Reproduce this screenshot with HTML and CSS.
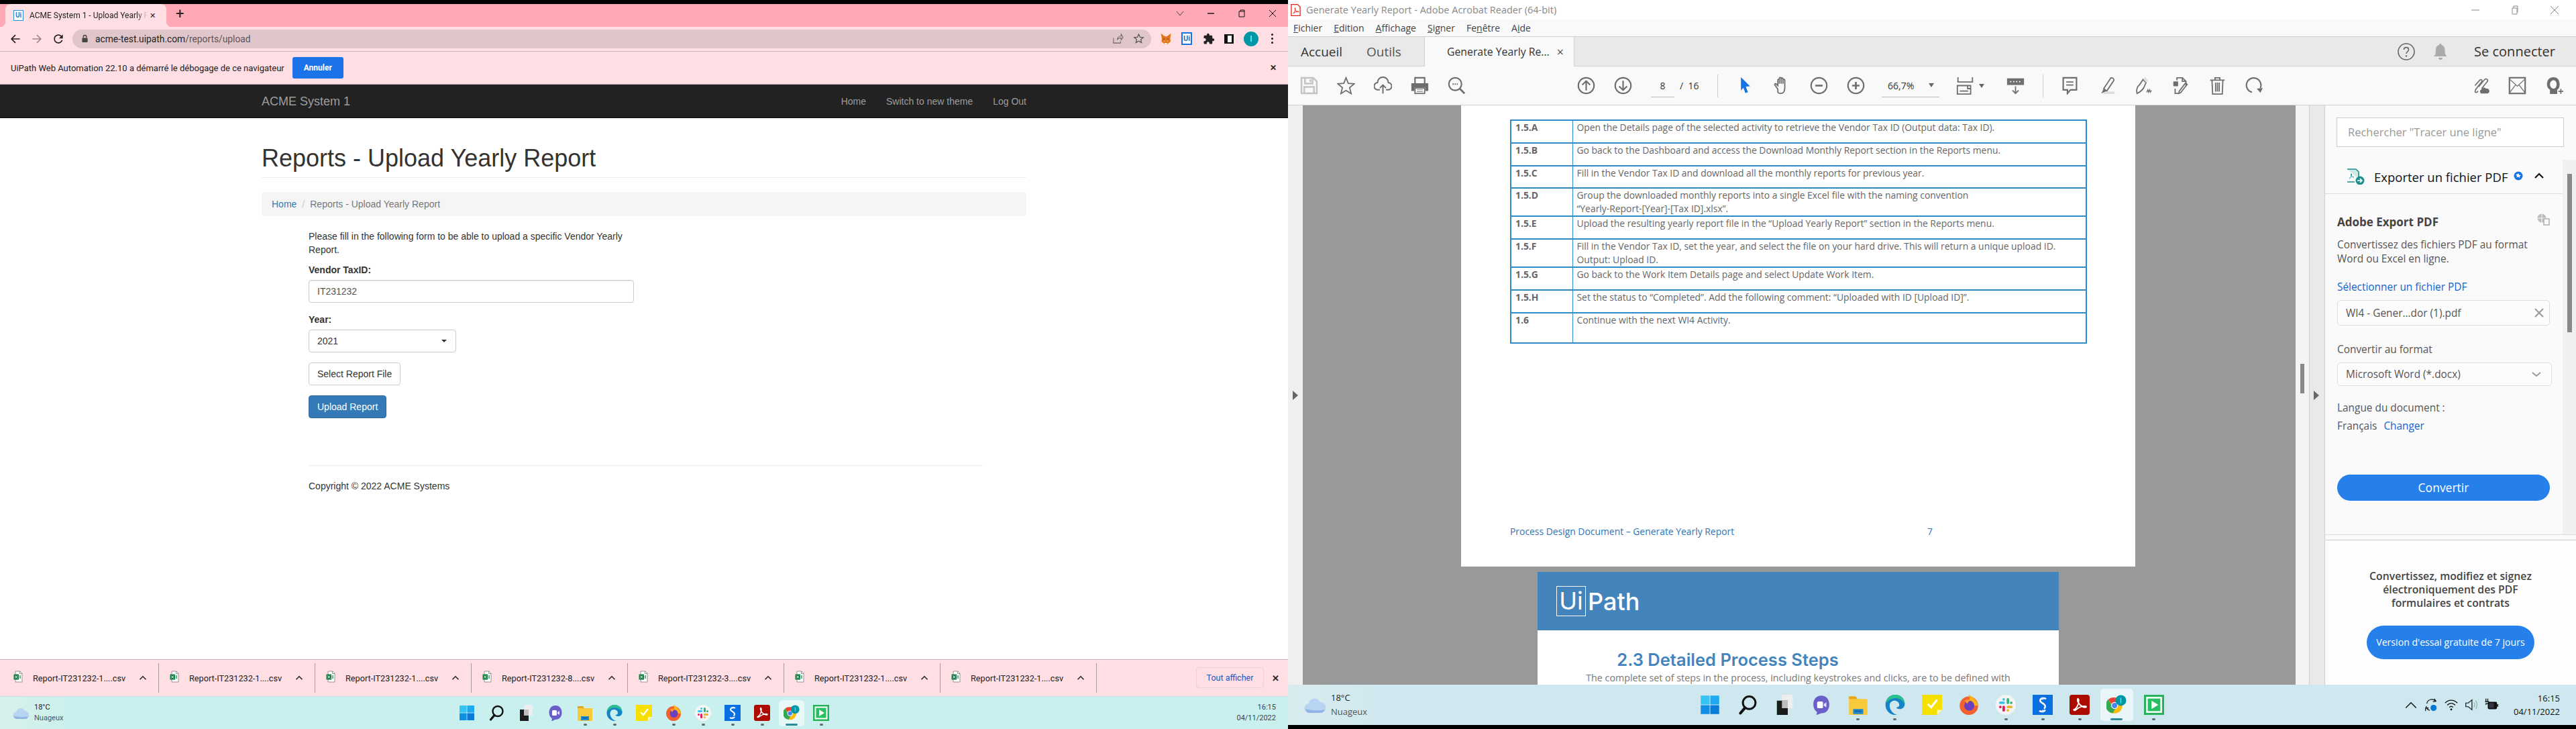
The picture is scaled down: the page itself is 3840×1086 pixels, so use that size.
FILE: index.html
```html
<!DOCTYPE html>
<html lang="en">
<head>
  <meta charset="UTF-8" />
  <title>ACME System 1 - Upload Yearly Report</title>
  <link rel="stylesheet" href="styles.css">
</head>
<body>
  <!-- shared icons -->
  <svg class="sprite" xmlns="http://www.w3.org/2000/svg">
    <symbol id="i-win" viewBox="0 0 24 24">
      <rect x="1" y="1" width="10.6" height="10.6" fill="#35c2f5"/><rect x="12.4" y="1" width="10.6" height="10.6" fill="#1fa9ef"/>
      <rect x="1" y="12.4" width="10.6" height="10.6" fill="#0f8fe3"/><rect x="12.4" y="12.4" width="10.6" height="10.6" fill="#0a7bd6"/>
    </symbol>
    <symbol id="i-search" viewBox="0 0 24 24">
      <circle cx="14" cy="9.5" r="7.5" fill="none" stroke="#111" stroke-width="2.4"/><path d="M9 15.5L3.5 22" stroke="#111" stroke-width="3.2" stroke-linecap="round"/>
    </symbol>
    <symbol id="i-task" viewBox="0 0 24 24">
      <rect x="9" y="0" width="13" height="16" fill="#eee"/><rect x="3" y="7" width="13" height="17" fill="#1b1b1b"/><rect x="9" y="7" width="7" height="9" fill="#bdbdbd"/>
    </symbol>
    <symbol id="i-chat" viewBox="0 0 24 24">
      <path d="M12 1c6 0 9.500 4.500 9.500 10.500S18 22 12 22c-1.500 0-3.500 2-6 2l1-3.500C4 18.500 2.500 15.500 2.500 11.500 2.500 5.500 6 1 12 1z" fill="#6a5fc8"/>
      <rect x="7" y="8" width="7" height="8" rx="1.500" fill="#fff"/><path d="M15 11l3-2v6l-3-2z" fill="#e5e1fb"/>
    </symbol>
    <symbol id="i-folder" viewBox="0 0 24 24">
      <path d="M1 2h8l2 3h12v19H1z" fill="#f9c93c"/><path d="M1 2h8l2 3H1z" fill="#e3a51a"/><rect x="6" y="17" width="12" height="6" fill="#1b8ad1"/><rect x="8" y="19" width="8" height="1" fill="#0a4f85"/>
    </symbol>
    <symbol id="i-edge" viewBox="0 0 24 24">
      <path d="M12 0c7 0 11.500 5 11.500 11 0 4-3 6-6 6-2.500 0-4-1-4-2 2 0 3.500-1 3.500-3 0-3-3-5-6-5-3.500 0-5.500 3-5.500 6 0 5 4 10 9 11-7 1-14-4-14-12C.5 5 5.500 0 12 0z" fill="#1683c9"/>
      <path d="M1 10C2 4 7 0 12 0c7 0 11.500 5 11.500 11-2-4-6-7-11-7-5 0-9 3-11.500 6z" fill="#2bc18c"/>
    </symbol>
    <symbol id="i-sticky" viewBox="0 0 24 24">
      <path d="M0 0h24v18l-6 6H0z" fill="#f5e000"/><path d="M18 24v-6h6z" fill="#fff8b0"/><path d="M7 11l4 4 7-9" fill="none" stroke="#fff" stroke-width="2.400"/>
    </symbol>
    <symbol id="i-firefox" viewBox="0 0 24 24">
      <circle cx="12" cy="13" r="11" fill="#f4602d"/><path d="M12 0c5 3 10 7 11 13H14z" fill="#fcb316"/><circle cx="12.500" cy="13" r="6" fill="#6a3fc0"/><path d="M7 7c2-2 6-2 8 0-3 0-4 2-5 4z" fill="#ff9a2a"/>
    </symbol>
    <symbol id="i-slack" viewBox="0 0 24 24">
      <circle cx="12" cy="12" r="12" fill="#f4f4f4"/>
      <rect x="13" y="4" width="3" height="7" rx="1.500" fill="#2eb67d"/><rect x="17" y="8" width="3" height="3" rx="1.500" fill="#2eb67d"/>
      <rect x="4" y="8" width="7" height="3" rx="1.500" fill="#36c5f0"/><rect x="8" y="4" width="3" height="3" rx="1.500" fill="#36c5f0"/>
      <rect x="13" y="13" width="7" height="3" rx="1.500" fill="#ecb22e"/><rect x="13" y="17" width="3" height="3" rx="1.500" fill="#ecb22e"/>
      <rect x="8" y="13" width="3" height="7" rx="1.500" fill="#e01e5a"/><rect x="4" y="13" width="3" height="3" rx="1.500" fill="#e01e5a"/>
    </symbol>
    <symbol id="i-sblue" viewBox="0 0 24 24">
      <rect width="24" height="24" fill="#0a6fe0"/><path d="M16 5c-3-2-7-1-7 2 0 3 6 3 6 7 0 1-.5 2-1.500 2.500M8 19c2 1.500 6 1.500 7-1" fill="none" stroke="#fff" stroke-width="2"/><path d="M12 3v3M12 18v3" stroke="#cfe6ff" stroke-width="1.500"/>
    </symbol>
    <symbol id="i-acro" viewBox="0 0 24 24">
      <rect width="24" height="24" rx="3" fill="#ad0b00"/><path d="M5 18c3-1 6-6 6-11 0-3-1.500-3-1.500-1 0 4 5 9 9 9 2 0 2-1.500 0-1.500-3 0-8 2-11 4.500-1 1-2.500.5-2.500 0z" fill="none" stroke="#fff" stroke-width="1.500"/>
    </symbol>
    <symbol id="i-chrome" viewBox="0 0 32 32">
      <circle cx="13" cy="17" r="12.500" fill="#fbbc04"/>
      <path d="M13 4.500A12.500 12.500 0 0 1 24.500 12H13a5 5 0 0 0-4.500 3L3 7.500A12.500 12.500 0 0 1 13 4.500z" fill="#ea4335"/>
      <path d="M3 7.500l5.500 9.500a5 5 0 0 0 6 4.700L10 29.200A12.500 12.500 0 0 1 3 7.500z" fill="#34a853"/>
      <circle cx="13" cy="17" r="5.500" fill="#fff"/><circle cx="13" cy="17" r="4.200" fill="#4285f4"/>
      <circle cx="23" cy="9" r="8.500" fill="#0097a7"/><rect x="22.500" y="5" width="1" height="8" fill="#c8eef2"/>
    </symbol>
    <symbol id="i-green" viewBox="0 0 24 24">
      <rect width="24" height="24" fill="#27b35a"/><rect x="2.500" y="2.500" width="19" height="19" fill="#fff"/><rect x="4.500" y="4.500" width="15" height="15" fill="#27c060"/><path d="M9 7l8 5-8 5z" fill="#fff"/>
    </symbol>
    <symbol id="i-cloud" viewBox="0 0 32 28">
      <path d="M8 26a7 7 0 0 1-1-14 9 9 0 0 1 17-2 8 8 0 0 1 1 16z" fill="#b9d3f2"/><path d="M2 20a7 7 0 0 0 6 6h17a8 8 0 0 0 6-5c-8 2-21 2-29-1z" fill="#8fb4e6"/>
    </symbol>
    <symbol id="i-xls" viewBox="0 0 14 18">
      <path d="M3 1h7l3 3v13H3z" fill="#fff" stroke="#8a8a8a" stroke-width=".9"/><path d="M9.500 1v3.500H13" fill="none" stroke="#8a8a8a" stroke-width=".9"/><rect x="0.500" y="5.500" width="7.500" height="8" fill="#107c41"/><path d="M2.400 7.500l3.700 4M6.100 7.500l-3.700 4" stroke="#fff"/><path d="M10 7v5" stroke="#21a366" stroke-width="1.500"/>
    </symbol>
    <symbol id="i-chev" viewBox="0 0 16 10">
      <path d="M2 8l6-6 6 6" fill="none" stroke="#222" stroke-width="2"/>
    </symbol>
  </svg>

  <div class="screen">
    <!-- left window: browser -->
    <div class="browser">
      <div class="tabstrip">
        <div class="tab">
          <span class="favicon">Ui</span>
          <span class="tab-title">ACME System 1 - Upload Yearly R</span>
          <span class="tab-close">&#10005;</span>
        </div>
        <span class="newtab">+</span>
        <div class="winctl">
          <svg class="ctl" viewBox="0 0 12 12"><path d="M1 3l5 6 5-6" fill="none" stroke="#444"/></svg>
          <svg class="ctl" viewBox="0 0 12 12"><path d="M1 6h10" stroke="#111" stroke-width="1.400"/></svg>
          <svg class="ctl" viewBox="0 0 12 12"><path d="M2 3h8v8H2zM4 3V1h6v2" fill="none" stroke="#111"/></svg>
          <svg class="ctl" viewBox="0 0 12 12"><path d="M1 1l10 10M11 1L1 11" stroke="#111"/></svg>
        </div>
      </div>
      <div class="toolbar">
        <svg class="nav-ico" viewBox="0 0 24 24"><path d="M20 12H5M12 5l-7 7 7 7" fill="none" stroke="#222" stroke-width="2"/></svg>
        <svg class="nav-ico" viewBox="0 0 24 24"><path d="M4 12h15M12 5l7 7-7 7" fill="none" stroke="#9a8a8e" stroke-width="2"/></svg>
        <svg class="nav-ico" viewBox="0 0 24 24"><path fill="#222" d="M17.650 6.350C16.200 4.900 14.210 4 12 4c-4.420 0-7.990 3.580-7.990 8s3.570 8 7.990 8c3.730 0 6.840-2.550 7.730-6h-2.080c-.82 2.330-3.040 4-5.650 4-3.310 0-6-2.690-6-6s2.690-6 6-6c1.660 0 3.140.69 4.220 1.780L13 11h7V4l-2.350 2.350z"/></svg>
        <div class="omnibox">
          <svg class="lock" viewBox="0 0 12 14"><path d="M3.500 6V4a2.500 2.500 0 0 1 5 0v2" fill="none" stroke="#444" stroke-width="1.500"/><rect x="1.500" y="6" width="9" height="7" rx="1" fill="#444"/></svg>
          <span class="url">acme-test.uipath.com<span class="url-path">/reports/upload</span></span>
          <svg class="omni-ico share" viewBox="0 0 18 18"><path d="M2 8v8h11v-3M8 11c0-4 3-6 6-6V2l3 5-3 4V8c-3 0-5 1-6 3z" fill="none" stroke="#666" stroke-width="1.100"/></svg>
          <svg class="omni-ico" viewBox="0 0 18 18"><path d="M9 2l2.100 4.700 5 .5-3.800 3.300 1.100 5L9 13l-4.400 2.500 1.100-5L1.900 7.200l5-.5z" fill="none" stroke="#555" stroke-width="1.300"/></svg>
        </div>
        <div class="ext-icons">
          <svg class="ext fox" viewBox="0 0 24 24"><path fill="#e2761b" d="M2 1l8 6h4l8-6-1.500 11 1 5-5 4-2.500 2h-3L8 21l-5-4 1-5z"/><path fill="#f6a25a" d="M10 14l-3 3 3 1zM14 14l3 3-3 1z"/><path fill="#fff3e4" d="M9 20h6l-1.500 3h-3z"/><circle cx="8" cy="12" r="1" fill="#333"/><circle cx="16" cy="12" r="1" fill="#333"/></svg>
          <span class="ext-ui">Ui</span>
          <svg class="ext" viewBox="0 0 24 24"><path fill="#222" d="M20.500 11H19V7c0-1.100-.9-2-2-2h-4V3.500C13 2.120 11.880 1 10.500 1S8 2.120 8 3.500V5H4c-1.100 0-1.990.9-1.990 2v3.800H3.500c1.490 0 2.700 1.210 2.700 2.700s-1.210 2.700-2.700 2.700H2V20c0 1.100.9 2 2 2h3.800v-1.500c0-1.490 1.210-2.700 2.700-2.700 1.490 0 2.700 1.210 2.700 2.700V22H17c1.100 0 2-.9 2-2v-4h1.500c1.380 0 2.500-1.120 2.500-2.500S21.880 11 20.500 11z"/></svg>
          <span class="side-panel"></span>
          <span class="avatar">I</span>
          <span class="kebab"><i></i><i></i><i></i></span>
        </div>
      </div>
      <div class="infobar">
        <span class="info-text">UiPath Web Automation 22.10 a démarré le débogage de ce navigateur</span>
        <button class="info-btn">Annuler</button>
        <span class="info-close">&#10005;</span>
      </div>

      <div class="page">
        <nav class="navbar">
          <div class="container nav-inner">
            <span class="brand">ACME System 1</span>
            <ul class="nav-links">
              <li>Home</li>
              <li>Switch to new theme</li>
              <li>Log Out</li>
            </ul>
          </div>
        </nav>
        <div class="container">
          <h1 class="page-header">Reports - Upload Yearly Report</h1>
          <div class="breadcrumb"><a>Home</a><span class="slash">/</span><span class="crumb-active">Reports - Upload Yearly Report</span></div>
          <form class="upload-form">
            <p class="lead-text">Please fill in the following form to be able to upload a specific Vendor Yearly Report.</p>
            <label class="lbl">Vendor TaxID:</label>
            <div class="form-control wide">IT231232</div>
            <label class="lbl">Year:</label>
            <div class="form-control year">2021<span class="caret"></span></div>
            <div class="btn btn-default">Select Report File</div>
            <div class="btn btn-primary">Upload Report</div>
          </form>
          <footer class="site-footer">Copyright © 2022 ACME Systems</footer>
        </div>
      </div>

      <div class="downloads">
        <div class="dl-item"><svg class="xls"><use href="#i-xls"/></svg><span class="dl-name">Report-IT231232-1....csv</span><svg class="dl-chev"><use href="#i-chev"/></svg></div>
        <div class="dl-item"><svg class="xls"><use href="#i-xls"/></svg><span class="dl-name">Report-IT231232-1....csv</span><svg class="dl-chev"><use href="#i-chev"/></svg></div>
        <div class="dl-item"><svg class="xls"><use href="#i-xls"/></svg><span class="dl-name">Report-IT231232-1....csv</span><svg class="dl-chev"><use href="#i-chev"/></svg></div>
        <div class="dl-item"><svg class="xls"><use href="#i-xls"/></svg><span class="dl-name">Report-IT231232-8....csv</span><svg class="dl-chev"><use href="#i-chev"/></svg></div>
        <div class="dl-item"><svg class="xls"><use href="#i-xls"/></svg><span class="dl-name">Report-IT231232-3....csv</span><svg class="dl-chev"><use href="#i-chev"/></svg></div>
        <div class="dl-item"><svg class="xls"><use href="#i-xls"/></svg><span class="dl-name">Report-IT231232-1....csv</span><svg class="dl-chev"><use href="#i-chev"/></svg></div>
        <div class="dl-item"><svg class="xls"><use href="#i-xls"/></svg><span class="dl-name">Report-IT231232-1....csv</span><svg class="dl-chev"><use href="#i-chev"/></svg></div>
        <div class="dl-show">Tout afficher</div>
        <span class="dl-close">&#10005;</span>
      </div>

      <div class="taskbar tb-small">
        <div class="weather"><svg class="w-cloud"><use href="#i-cloud"/></svg><div><div class="w-temp">18°C</div><div class="w-desc">Nuageux</div></div></div>
        <div class="tb-icons">
          <div class="tb-item"><svg><use href="#i-win"/></svg><i></i></div>
          <div class="tb-item"><svg><use href="#i-search"/></svg><i></i></div>
          <div class="tb-item"><svg><use href="#i-task"/></svg><i></i></div>
          <div class="tb-item"><svg><use href="#i-chat"/></svg><i></i></div>
          <div class="tb-item open"><svg><use href="#i-folder"/></svg><i></i></div>
          <div class="tb-item open"><svg><use href="#i-edge"/></svg><i></i></div>
          <div class="tb-item"><svg><use href="#i-sticky"/></svg><i></i></div>
          <div class="tb-item open"><svg><use href="#i-firefox"/></svg><i></i></div>
          <div class="tb-item open"><svg><use href="#i-slack"/></svg><i></i></div>
          <div class="tb-item open"><svg><use href="#i-sblue"/></svg><i></i></div>
          <div class="tb-item open"><svg><use href="#i-acro"/></svg><i></i></div>
          <div class="tb-item active"><svg><use href="#i-chrome"/></svg><i></i></div>
          <div class="tb-item open"><svg><use href="#i-green"/></svg><i></i></div>
        </div>
        <div class="tray"><div class="clock">16:15<br>04/11/2022</div></div>
      </div>
    </div>

    <!-- right window: acrobat -->
    <div class="acrobat">
      <div class="titlebar">
        <svg class="pdf-logo" viewBox="0 0 16 20"><path d="M1 1h10l4 4v14H1z" fill="#fff" stroke="#e2231a" stroke-width="1.400"/><path d="M4 15c2-1 3.500-4 3.500-7 0-2-1-2-1-.5 0 2.500 3 5.500 5.500 5.500 1.200 0 1.200-1 0-1-2 0-5 1-7 3z" fill="none" stroke="#e2231a"/></svg>
        <span class="title-text">Generate Yearly Report - Adobe Acrobat Reader (64-bit)</span>
        <div class="winctl-light">
          <svg class="ctl" viewBox="0 0 14 14"><path d="M1 7h12" stroke="#888"/></svg>
          <svg class="ctl" viewBox="0 0 14 14"><path d="M3 4h7v9H3zM5 4V1h6v9h-1" fill="none" stroke="#888"/></svg>
          <svg class="ctl" viewBox="0 0 14 14"><path d="M1 1l12 12M13 1L1 13" stroke="#888"/></svg>
        </div>
      </div>
      <div class="menubar">
        <span><u>F</u>ichier</span><span><u>E</u>dition</span><span><u>A</u>ffichage</span><span><u>S</u>igner</span><span>Fe<u>n</u>être</span><span>A<u>i</u>de</span>
      </div>
      <div class="tabbar">
        <span class="home-tab">Accueil</span>
        <span class="home-tab tools-tab">Outils</span>
        <div class="doc-tab"><span>Generate Yearly Re...</span><span class="doc-close">&#215;</span></div>
        <div class="tab-right">
          <svg class="help" viewBox="0 0 26 26"><circle cx="13" cy="13" r="12" fill="none" stroke="#666" stroke-width="1.600"/><path d="M9.500 10c0-4.500 7-4.500 7 0 0 3-3.500 3-3.500 6" fill="none" stroke="#666" stroke-width="1.600"/><circle cx="13" cy="19.500" r="1.200" fill="#666"/></svg>
          <svg class="bell" viewBox="0 0 22 26"><path d="M11 1c1 0 1.500 1 1.500 2 4 1 5 4 5 8 0 5 1 7 3 9H1c2-2 3-4 3-9 0-4 1-7 5-8 0-1 .5-2 2-2z" fill="#aaa"/><path d="M8 22h6a3 3 0 0 1-6 0z" fill="#aaa"/></svg>
          <span class="signin">Se connecter</span>
        </div>
      </div>
      <div class="acro-tools">
        <span class="tool"><svg viewBox="0 0 26 26" class="faded"><path d="M2 2h17l5 5v17H2zM7 2v8h11V2M6 24v-9h14v9M15 4v4" fill="none" stroke="#c4c4c4" stroke-width="2.400"/></svg></span>
        <span class="tool"><svg viewBox="0 0 30 30"><path d="M15 2l3.700 9.300 10 .7-7.700 6.500 2.500 9.800L15 23l-8.500 5.300L9 18.500 1.300 12l10-.7z" fill="none" stroke="#6e6e6e" stroke-width="2"/></svg></span>
        <span class="tool"><svg viewBox="0 0 30 30"><path d="M10 22H7a6 6 0 0 1-1-12 9 9 0 0 1 18 0 6 6 0 0 1-1 12h-3M15 28V14M10 19l5-5 5 5" fill="none" stroke="#6e6e6e" stroke-width="2.200"/></svg></span>
        <span class="tool"><svg viewBox="0 0 30 30"><path d="M7 11V2h16v9" fill="none" stroke="#6e6e6e" stroke-width="2.400"/><path d="M1 11h28v13h-5v-6H6v6H1z" fill="#6e6e6e"/><rect x="7" y="19" width="16" height="9" fill="#fff" stroke="#6e6e6e" stroke-width="2"/><path d="M10 22h10M10 25h10" stroke="#6e6e6e"/></svg></span>
        <span class="tool"><svg viewBox="0 0 30 30"><circle cx="12.500" cy="12.500" r="10.500" fill="none" stroke="#6e6e6e" stroke-width="2.400"/><path d="M20 20l8 8" stroke="#6e6e6e" stroke-width="3"/><path d="M8 12.500h2M11.500 12.500h2M15 12.500h2" stroke="#6e6e6e" stroke-width="2"/></svg></span>
        <span class="tool nav-first"><svg viewBox="0 0 30 30"><circle cx="15" cy="15" r="13" fill="none" stroke="#6e6e6e" stroke-width="2.400"/><path d="M15 23V8M8.500 14L15 7.500l6.500 6.500" fill="none" stroke="#6e6e6e" stroke-width="2.400"/></svg></span>
        <span class="tool"><svg viewBox="0 0 30 30"><circle cx="15" cy="15" r="13" fill="none" stroke="#6e6e6e" stroke-width="2.400"/><path d="M15 7v15M8.500 16l6.500 6.500 6.500-6.500" fill="none" stroke="#6e6e6e" stroke-width="2.400"/></svg></span>
        <div class="pager"><span class="page-num">8</span><span class="page-total">/&nbsp; 16</span></div>
        <span class="tool-sep"></span>
        <span class="tool"><svg viewBox="0 0 30 30"><path d="M8 1l15 15-7 .8 3.500 9-4 1.700-3.500-9L8 23z" fill="#1473e6"/></svg></span>
        <span class="tool"><svg viewBox="0 0 30 30"><path d="M8 21l-5-7c-1-2 1-3 2.500-1.500L8 15V6c0-2 2.500-2 2.500 0v6-9c0-2 3-2 3 0v9-8c0-2 3-2 3 0v8-6c0-2 3-2 3 0v13c0 6-3 9-6 9h-2c-2 0-3-1-3.500-2z" fill="none" stroke="#6e6e6e" stroke-width="2"/></svg></span>
        <span class="tool"><svg viewBox="0 0 30 30"><circle cx="15" cy="15" r="13" fill="none" stroke="#6e6e6e" stroke-width="2.400"/><path d="M9 15h12" stroke="#6e6e6e" stroke-width="3"/></svg></span>
        <span class="tool"><svg viewBox="0 0 30 30"><circle cx="15" cy="15" r="13" fill="none" stroke="#6e6e6e" stroke-width="2.400"/><path d="M9 15h12M15 9v12" stroke="#6e6e6e" stroke-width="3"/></svg></span>
        <div class="zoom-box"><span>66,7%</span><span class="zoom-caret"></span></div>
        <span class="tool fit"><svg viewBox="0 0 30 30"><path d="M3 1v8h24V1M2 15h22v14H2zM19 15v5h5M6 24h14" fill="none" stroke="#6e6e6e" stroke-width="2"/></svg></span>
        <span class="zoom-caret tool-caret"></span>
        <span class="tool kb"><svg viewBox="0 0 30 30"><rect x="1" y="3" width="28" height="11" fill="#6e6e6e"/><path d="M6 8.500h2M11 8.500h2M16 8.500h2M21 8.500h2" stroke="#fff" stroke-width="2"/><path d="M15 16v12M10 23l5 5 5-5" fill="none" stroke="#6e6e6e" stroke-width="2"/></svg></span>
        <span class="tool-sep sep-b"></span>
        <span class="tool"><svg viewBox="0 0 30 30"><path d="M4 2h22v20H16l-5 6v-6H4z" fill="none" stroke="#6e6e6e" stroke-width="2.400"/><path d="M9 9h12M9 14h12" stroke="#6e6e6e" stroke-width="2"/></svg></span>
        <span class="tool"><svg viewBox="0 0 30 30"><path d="M10 20L22 2c3 0 5 2 5 4L15 24z" fill="none" stroke="#6e6e6e" stroke-width="2"/><path d="M3 29h25v-4H12L9 29" fill="#dcdcdc"/><path d="M10 20l5 4-9 4z" fill="#6e6e6e"/></svg></span>
        <span class="tool"><svg viewBox="0 0 30 30"><path d="M4 28c-2-6 1-12 4-14l6-9 5 5-4 9c-3 4-6 7-11 9z" fill="none" stroke="#6e6e6e" stroke-width="2"/><path d="M14 4l4-3 4 6-3 3" fill="#dcdcdc"/><path d="M20 26l2-4 1 4 2-4 1 4 2-3" fill="none" stroke="#6e6e6e" stroke-width="1.500"/></svg></span>
        <span class="tool"><svg viewBox="0 0 30 30"><path d="M9 6V2h9l6 6v7M18 2v6h6" fill="none" stroke="#6e6e6e" stroke-width="2"/><rect x="3" y="8" width="8" height="8" rx="1" fill="#6e6e6e"/><path d="M6 20v8h7M26 13L15 27l-3 1 1-4 10-13z" fill="none" stroke="#6e6e6e" stroke-width="2"/></svg></span>
        <span class="tool"><svg viewBox="0 0 30 30"><path d="M3 6h24M11 6V2h8v4M6 6l1 23h16l1-23M12 10v15M15 10v15M18 10v15" fill="none" stroke="#6e6e6e" stroke-width="2"/></svg></span>
        <span class="tool"><svg viewBox="0 0 30 30"><path d="M11 26A12 12 0 1 1 25 19" fill="none" stroke="#6e6e6e" stroke-width="2.400"/><path d="M19 20l6 7 4-8z" fill="#6e6e6e"/></svg></span>
        <div class="tools-end">
          <span class="tool"><svg viewBox="0 0 30 30"><path d="M12 17l10-12c3-3 7 1 4 4l-9 11M6 15l8-9c2-2 5 0 3 3L9 19c-2 2-4 7-2 7 3 1 4-2 4-2" fill="none" stroke="#6e6e6e" stroke-width="1.800"/><path d="M16 28a4 4 0 0 1 1-7 4 4 0 0 1 7-1 4 4 0 0 1 3 8z" fill="#6e6e6e"/></svg></span>
          <span class="tool"><svg viewBox="0 0 30 30"><rect x="2" y="2" width="26" height="26" fill="none" stroke="#6e6e6e" stroke-width="2.400"/><path d="M2 4l13 12L28 4M2 27l10-13M28 27L18 14" fill="none" stroke="#6e6e6e" stroke-width="1.400"/></svg></span>
          <span class="tool"><svg viewBox="0 0 30 30"><path fill-rule="evenodd" d="M14 1C7 1 3 6 3 13c0 4 2 7 5 9v7h12v-7c3-2 4-5 4-9 0-7-4-12-10-12zm0 5c3 0 5 3 5 7s-2 7-5 7-6-3-6-7 3-7 6-7z" fill="#6e6e6e"/><path d="M26 20v9M21.500 24.500h9" stroke="#fafafa" stroke-width="4"/><path d="M26 20.500v8M22 24.500h8" stroke="#6e6e6e" stroke-width="2"/></svg></span>
        </div>
      </div>

      <div class="doc-area">
        <div class="nav-pane"><span class="pane-arrow"></span></div>
        <div class="viewer">
          <div class="pdf-page">
            <table class="steps">
              <tr class="r34"><td>1.5.A</td><td>Open the Details page of the selected activity to retrieve the Vendor Tax ID (Output data: Tax ID).</td></tr>
              <tr class="r34"><td>1.5.B</td><td>Go back to the Dashboard and access the Download Monthly Report section in the Reports menu.</td></tr>
              <tr class="r33"><td>1.5.C</td><td>Fill in the Vendor Tax ID and download all the monthly reports for previous year.</td></tr>
              <tr class="r42"><td>1.5.D</td><td>Group the downloaded monthly reports into a single Excel file with the naming convention<br>“Yearly-Report-[Year]-[Tax ID].xlsx”.</td></tr>
              <tr class="r34"><td>1.5.E</td><td>Upload the resulting yearly report file in the “Upload Yearly Report” section in the Reports menu.</td></tr>
              <tr class="r42"><td>1.5.F</td><td>Fill in the Vendor Tax ID, set the year, and select the file on your hard drive. This will return a unique upload ID.<br>Output: Upload ID.</td></tr>
              <tr class="r34"><td>1.5.G</td><td>Go back to the Work Item Details page and select Update Work Item.</td></tr>
              <tr class="r34"><td>1.5.H</td><td>Set the status to “Completed”. Add the following comment: “Uploaded with ID [Upload ID]”.</td></tr>
              <tr class="r45"><td>1.6</td><td>Continue with the next WI4 Activity.</td></tr>
            </table>
            <div class="pdf-footer"><span>Process Design Document – Generate Yearly Report</span><span>7</span></div>
          </div>
          <div class="pdf-page-2">
            <div class="pdf-banner"><span class="logo-ui">Ui</span><span class="logo-path">Path</span></div>
            <h2 class="pdf-h2">2.3 Detailed Process Steps</h2>
            <p class="pdf-p">The complete set of steps in the process, including keystrokes and clicks, are to be defined with</p>
          </div>
        </div>
        <div class="splitter"><span class="split-handle"></span><span class="pane-arrow"></span></div>

        <aside class="panel">
          <div class="panel-search">Rechercher "Tracer une ligne"</div>
          <div class="panel-main">
            <div class="panel-body">
              <div class="export-head">
                <svg class="export-ico" viewBox="0 0 28 24"><path d="M2 1h13l4 4v10M13 20H2z" fill="#cfe9e7" stroke="#1a8f8b" stroke-width="1.600"/><path d="M5 15c2-1 3-3 3.500-6 0-1.500-1-1.500-1 0 0 2 2 4 4.500 4" fill="none" stroke="#1a8f8b"/><circle cx="21" cy="18" r="6.500" fill="#1a8f8b"/><path d="M17 18h7M21 15l3 3-3 3" fill="none" stroke="#fff" stroke-width="1.600"/></svg>
                <span class="export-title">Exporter un fichier PDF</span>
                <svg class="badge" viewBox="0 0 14 14"><circle cx="7" cy="7" r="6.500" fill="#1473e6"/><path d="M7 3l1.200 2.600 2.800.3-2.100 1.900.6 2.800L7 8.200 4.500 9.600l.6-2.800L3 4.900l2.800-.3z" fill="#fff"/></svg>
                <svg class="collapse" viewBox="0 0 16 10"><path d="M2 8l6-6 6 6" fill="none" stroke="#111" stroke-width="2.200"/></svg>
              </div>
              <div class="export-form">
                <div class="export-h"><span>Adobe Export PDF</span><svg class="globe" viewBox="0 0 20 18"><circle cx="8" cy="7" r="6.500" fill="#bbb"/><path d="M1.500 7h13M8 .5v13" stroke="#fafafa"/><rect x="11" y="8" width="8" height="9" fill="#fafafa" stroke="#aaa" stroke-width="1.400"/></svg></div>
                <p class="export-desc">Convertissez des fichiers PDF au format<br>Word ou Excel en ligne.</p>
                <div class="link-line">Sélectionner un fichier PDF</div>
                <div class="field file-field"><span>WI4 - Gener...dor (1).pdf</span><svg class="field-x" viewBox="0 0 14 14"><path d="M1 1l12 12M13 1L1 13" stroke="#999" stroke-width="2"/></svg></div>
                <div class="plain-line">Convertir au format</div>
                <div class="field select-field"><span>Microsoft Word (*.docx)</span><svg class="field-chev" viewBox="0 0 14 8"><path d="M1 1l6 5 6-5" fill="none" stroke="#999" stroke-width="1.800"/></svg></div>
                <div class="plain-line lang">Langue du document :</div>
                <div class="plain-line lang-val">Français <span class="change">Changer</span></div>
                <div class="convert-btn">Convertir</div>
              </div>
            </div>
            <div class="panel-scroll"><span class="panel-thumb"></span></div>
          </div>
          <div class="panel-promo">
            <p>Convertissez, modifiez et signez<br>électroniquement des PDF<br>formulaires et contrats</p>
            <div class="trial-btn">Version d'essai gratuite de 7 jours</div>
          </div>
        </aside>
      </div>

      <div class="taskbar tb-large">
        <div class="weather"><svg class="w-cloud"><use href="#i-cloud"/></svg><div><div class="w-temp">18°C</div><div class="w-desc">Nuageux</div></div></div>
        <div class="tb-icons">
          <div class="tb-item"><svg><use href="#i-win"/></svg><i></i></div>
          <div class="tb-item"><svg><use href="#i-search"/></svg><i></i></div>
          <div class="tb-item"><svg><use href="#i-task"/></svg><i></i></div>
          <div class="tb-item"><svg><use href="#i-chat"/></svg><i></i></div>
          <div class="tb-item open"><svg><use href="#i-folder"/></svg><i></i></div>
          <div class="tb-item open"><svg><use href="#i-edge"/></svg><i></i></div>
          <div class="tb-item"><svg><use href="#i-sticky"/></svg><i></i></div>
          <div class="tb-item"><svg><use href="#i-firefox"/></svg><i></i></div>
          <div class="tb-item open"><svg><use href="#i-slack"/></svg><i></i></div>
          <div class="tb-item open"><svg><use href="#i-sblue"/></svg><i></i></div>
          <div class="tb-item open"><svg><use href="#i-acro"/></svg><i></i></div>
          <div class="tb-item active"><svg><use href="#i-chrome"/></svg><i></i></div>
          <div class="tb-item open"><svg><use href="#i-green"/></svg><i></i></div>
        </div>
        <div class="tray">
          <svg class="tray-ico" viewBox="0 0 20 20"><path d="M3 14l7-7 7 7" fill="none" stroke="#111" stroke-width="1.300"/></svg>
          <svg class="tray-ico" viewBox="0 0 24 24"><path d="M5 10a8 8 0 0 1 14-4M17 2l3 4-5 1M4 14a8 8 0 0 0 6 7M3 22v-5h5" fill="none" stroke="#111" stroke-width="1.300"/><circle cx="16" cy="17" r="5" fill="#0078d4"/></svg>
          <svg class="tray-ico" viewBox="0 0 24 24"><path d="M2 9c6-6 14-6 20 0M5.500 12.500c4-4 9-4 13 0M9 16c2-2 4-2 6 0" fill="none" stroke="#111" stroke-width="1.500"/><circle cx="12" cy="19.500" r="1.600" fill="#111"/></svg>
          <svg class="tray-ico" viewBox="0 0 24 24"><path d="M3 9h4l6-5v16l-6-5H3z" fill="none" stroke="#111" stroke-width="1.300"/><path d="M16 8c2 2 2 6 0 8M19 5c3 3 3 11 0 14" fill="none" stroke="#8aa" stroke-width="1.200"/></svg>
          <svg class="tray-ico" viewBox="0 0 24 24"><rect x="6" y="7" width="15" height="12" rx="2" fill="#111"/><rect x="8" y="9" width="8" height="8" fill="#334"/><rect x="21" y="11" width="2" height="4" fill="#111"/><path d="M3 2v5M6 2v5M1.500 7h6v3H3v2" stroke="#111" stroke-width="1.400" fill="none"/></svg>
          <div class="clock">16:15<br>04/11/2022</div>
        </div>
      </div>
    </div>
  </div>
</body>
</html>
```

FILE: styles.css
```css
:root {
  --chrome-pink: #ffdee4;
  --chrome-dark: #ffa9b7;
  --acro-line: #cfcfcf;
  --acro-bar: #f9f9f9;
  --acro-tab: #e9e9e9;
  --blue: #2680eb;
  --table-blue: #2e8bc8;
}
* { box-sizing: border-box; }
body {
  margin: 0;
  background: #000;
  font-family: 'Liberation Sans', Arial, sans-serif;
  color: #333;
}
.sprite { display: none; }
.screen {
  display: flex;
  width: 3840px;
  height: 1086px;
  overflow: hidden;
}

/* browser window */
.browser {
  width: 1920px;
  height: 1086px;
  padding-top: 6px;
  display: flex;
  flex-direction: column;
  font-family: Roboto, sans-serif;
}
.tabstrip {
  height: 34px;
  flex: none;
  background: var(--chrome-dark);
  display: flex;
  align-items: stretch;
  padding-left: 8px;
}
.tab {
  width: 240px;
  background: var(--chrome-pink);
  border-radius: 8px 8px 0 0;
  display: flex;
  align-items: center;
  padding: 0 0 0 12px;
  position: relative;
}
.tab::before, .tab::after {
  content: "";
  position: absolute;
  bottom: 0;
  width: 8px;
  height: 8px;
}
.tab::before { left: -8px; background: radial-gradient(circle at 0 0, transparent 8px, var(--chrome-pink) 8.500px); }
.tab::after { right: -8px; background: radial-gradient(circle at 100% 0, transparent 8px, var(--chrome-pink) 8.500px); }
.favicon {
  width: 15px;
  height: 16px;
  border: 1.500px solid #2a8fd6;
  color: #2a7fc0;
  font-size: 10px;
  font-weight: 700;
  line-height: 13px;
  text-align: center;
  background: #fff;
  flex: none;
}
.tab-title {
  margin-left: 9px;
  width: 176px;
  flex: none;
  white-space: nowrap;
  font-size: 12px;
  color: #222;
  -webkit-mask-image: linear-gradient(to right, #000 160px, transparent 176px);
  mask-image: linear-gradient(to right, #000 160px, transparent 176px);
}
.tab-close { font-size: 11px; margin-left: 3px; color: #222; }
.newtab { font-size: 22px; font-weight: 400; color: #222; margin-left: 14px; line-height: 30px; }
.winctl {
  margin-left: auto;
  display: flex;
  align-self: flex-start;
  padding-top: 8px;
  padding-right: 17px;
  gap: 34px;
}
.ctl { width: 12px; height: 12px; display: block; }

.toolbar {
  height: 37px;
  flex: none;
  background: var(--chrome-pink);
  border-bottom: 1px solid #c9b3b8;
  display: flex;
  align-items: center;
  padding: 0 0 1px 13px;
}
.nav-ico { width: 20px; height: 20px; margin-right: 12px; }
.omnibox {
  width: 1608px;
  margin-left: -1px;
  height: 28px;
  background: #e0c6ca;
  border-radius: 14px;
  display: flex;
  align-items: center;
  padding: 0 10px 0 13px;
}
.lock { width: 11px; height: 13px; }
.url { margin-left: 10px; font-size: 13.800px; color: #222; }
.url-path { color: #5f5458; }
.omni-ico { width: 17px; height: 17px; margin-left: 14px; }
.share { margin-left: auto; }
.ext-icons { display: flex; align-items: center; margin-left: 10px; }
.ext { width: 18px; height: 18px; display: block; margin-right: 14px; }
.fox { margin-left: 3px; }
.ext-ui {
  width: 16px;
  height: 19px;
  border: 2px solid #1a73e8;
  background: #fff;
  color: #2a6fc0;
  font-size: 11px;
  font-weight: 700;
  line-height: 15px;
  text-align: center;
  margin-right: 16px;
}
.side-panel {
  width: 14px;
  height: 14px;
  border: solid #111;
  border-width: 2px 3px 2px 5px;
  background: #fff;
  margin-right: 15px;
}
.avatar {
  width: 22px;
  height: 22px;
  border-radius: 50%;
  background: #0097a7;
  color: #d9f5f8;
  font-size: 12px;
  line-height: 22px;
  text-align: center;
}
.kebab { display: flex; flex-direction: column; gap: 3px; margin-left: 19px; }
.kebab i { width: 3px; height: 3px; border-radius: 50%; background: #111; display: block; }

.infobar {
  height: 49px;
  flex: none;
  background: var(--chrome-pink);
  border-bottom: 1px solid #c9b3b8;
  display: flex;
  align-items: center;
  padding: 0 17px 0 16px;
  font-size: 13px;
  color: #222;
}
.info-btn {
  margin-left: 12px;
  width: 76px;
  height: 32px;
  border: none;
  border-radius: 3px;
  background: #1a73e8;
  color: #fff;
  font: 700 12px Roboto, sans-serif;
}
.info-close { margin-left: auto; font-size: 12px; font-weight: 700; }

/* page content, bootstrap style */
.page {
  flex: 1;
  background: #fff;
  font-family: 'Liberation Sans', Arial, sans-serif;
  font-size: 14px;
  line-height: 20px;
  overflow: hidden;
}
.navbar {
  height: 50px;
  background: #222;
  border-bottom: 1px solid #080808;
}
.container { width: 1170px; margin: 0 auto; padding: 0 15px; }
.nav-inner { display: flex; justify-content: space-between; align-items: center; height: 49px; padding-top: 1px; }
.brand { font-size: 18px; color: #9d9d9d; }
.nav-links { list-style: none; margin: 0; padding: 0; display: flex; gap: 30px; color: #9d9d9d; }
.page-header {
  margin: 40px 0 21px;
  padding-bottom: 8px;
  border-bottom: 1px solid #eee;
  font-size: 36px;
  font-weight: 500;
  line-height: 40px;
  color: #333;
}
.breadcrumb {
  height: 36px;
  padding: 8px 15px;
  background: #f5f5f5;
  border-radius: 4px;
  font-size: 14px;
}
.breadcrumb a { color: #337ab7; }
.slash { color: #ccc; padding: 0 8px; }
.crumb-active { color: #777; }
.upload-form { width: 485px; margin-left: 70px; padding-top: 20px; }
.lead-text { margin: 0 0 10px; padding-right: 10px; }
.lbl { display: block; font-weight: 700; margin-top: 15px; margin-bottom: 5px; line-height: 20px; }
.lead-text + .lbl { margin-top: 0; }
.form-control {
  height: 34px;
  padding: 6px 12px;
  border: 1px solid #ccc;
  border-radius: 4px;
  box-shadow: inset 0 1px 1px rgba(0,0,0,.075);
  color: #555;
}
.year { width: 220px; display: flex; align-items: center; justify-content: space-between; color: #333; box-shadow: none; }
.caret { width: 0; height: 0; border: 4px solid transparent; border-top-color: #333; border-bottom: 0; margin-right: 1px; }
.btn {
  display: table;
  height: 34px;
  padding: 6px 12px;
  border: 1px solid #ccc;
  border-radius: 4px;
  margin-top: 15px;
}
.btn-primary { background: #337ab7; border-color: #2e6da4; color: #fff; }
.site-footer {
  margin: 70px 65px 0 70px;
  padding-top: 20px;
  border-top: 1px solid #eee;
}

.downloads {
  height: 56px;
  flex: none;
  background: var(--chrome-pink);
  border-top: 1px solid #c9b3b8;
  border-bottom: 1px solid #bfe3e3;
  display: flex;
  align-items: center;
  font-size: 12.700px;
  color: #222;
}
.dl-item {
  width: 233px;
  height: 44px;
  border-right: 1px solid #a89a9d;
  display: flex;
  align-items: center;
  padding-left: 20px;
  flex: none;
}
.dl-item:first-child { width: 236.500px; }
.dl-item + .dl-item { padding-left: 16.500px; }
.xls { width: 14px; height: 18px; flex: none; margin-bottom: 4px; }
.dl-name { margin-left: 15px; width: 138px; flex: none; white-space: nowrap; }
.dl-chev { width: 12px; height: 8px; margin-left: 20px; flex: none; }
.dl-show {
  margin-left: 148.500px;
  width: 101px;
  height: 31px;
  line-height: 29px;
  text-align: center;
  border: 1px solid #e6d3d7;
  border-radius: 4px;
  color: #1a56c0;
  margin-bottom: 2px;
  font-size: 12.500px;
}
.dl-close { margin-left: 12px; font-size: 13px; font-weight: 700; }

/* taskbars */
.taskbar {
  flex: none;
  display: grid;
  grid-template-columns: 1fr auto 1fr;
  color: #222;
}
.tb-small {
  height: 48px;
  background: linear-gradient(90deg, #d8f1ea, #c9f0ef 6%);
  --item: 44px;
  --ico: 24px;
  --top: 12px;
  --dot-gap: 4px;
  font-size: 11px;
}
.tb-large {
  height: 60px;
  background: linear-gradient(90deg, #d9ecf0, #cfe8ef 8%);
  --item: 55.100px;
  --ico: 30px;
  --top: 15px;
  --dot-gap: 5px;
  font-size: 13px;
  margin-bottom: 6px;
}
.weather { display: flex; align-items: center; padding-left: 19px; }
.tb-large .weather { padding-left: 24px; }
.w-cloud { width: 24px; height: 22px; }
.tb-large .w-cloud { width: 32px; height: 28px; }
.w-temp { margin-left: 8px; line-height: 16px; }
.w-desc { margin-left: 8px; line-height: 16px; color: #555; }
.tb-large .w-temp, .tb-large .w-desc { line-height: 21px; }
.tb-small .weather > div { margin-top: -1px; }
.tb-icons { display: flex; }
.tb-item {
  width: var(--item);
  padding-top: var(--top);
  display: flex;
  flex-direction: column;
  align-items: center;
}
.tb-item svg { width: var(--ico); height: var(--ico); display: block; }
.tb-item i { width: 5px; height: 3px; margin-top: var(--dot-gap); border-radius: 2px; display: block; }
.tb-item.open i { background: #666; }
.tb-item.active {
  background: rgba(255,255,255,.55);
  border-radius: 5px;
  margin: 5px 3px 4px;
  width: calc(var(--item) - 6px);
  padding-top: calc(var(--top) - 5px);
}
.tb-large .tb-item.active { margin: 6px 3px 6px; padding-top: calc(var(--top) - 6px); }
.tb-item.active i { width: 18px; background: #2a8a9a; }
.tray { display: flex; align-items: center; justify-content: flex-end; padding-right: 18px; }
.tb-small .tray { font-size: 11px; color: #444; }
.clock { text-align: right; line-height: 16px; }
.tb-large .clock { line-height: 20px; margin-left: 22px; padding-right: 6px; color: #111; }
.tray-ico { width: 22px; height: 22px; margin-left: 8px; }

/* acrobat window */
.acrobat {
  width: 1920px;
  height: 1086px;
  display: flex;
  flex-direction: column;
  font-family: 'Open Sans', sans-serif;
  color: #333;
}
.titlebar {
  height: 29px;
  flex: none;
  background: #fff;
  display: flex;
  align-items: center;
  padding-left: 4px;
}
.pdf-logo { width: 15px; height: 20px; }
.title-text { margin-left: 8px; font-size: 14.500px; color: #888; }
.winctl-light { margin-left: auto; display: flex; gap: 45px; padding-right: 25px; }
.winctl-light .ctl { width: 14px; height: 14px; }
.menubar {
  height: 26px;
  flex: none;
  background: var(--acro-bar);
  border-bottom: 1px solid var(--acro-line);
  display: flex;
  align-items: center;
  gap: 17px;
  padding-left: 8px;
  font-size: 14px;
  color: #444;
}
.tabbar {
  height: 44px;
  flex: none;
  background: var(--acro-tab);
  border-bottom: 1px solid var(--acro-line);
  display: flex;
  align-items: center;
  font-size: 19px;
  color: #333;
}
.home-tab { padding-left: 19px; width: 98px; }
.tools-tab { color: #555; width: 105px; }
.doc-tab {
  width: 224px;
  height: 44px;
  background: var(--acro-bar);
  border: 1px solid var(--acro-line);
  border-width: 0 1px;
  margin-bottom: -1px;
  padding-left: 33px;
  display: flex;
  align-items: center;
  font-size: 15.800px;
}
.doc-close { margin-left: 11px; font-size: 18px; color: #555; }
.tab-right { margin-left: auto; display: flex; align-items: center; padding-right: 31px; }
.help { width: 26px; height: 26px; }
.bell { width: 22px; height: 26px; margin-left: 27px; }
.signin { margin-left: 39px; font-size: 20px; }

.acro-tools {
  height: 58px;
  flex: none;
  background: var(--acro-bar);
  border-bottom: 1px solid var(--acro-line);
  display: flex;
  align-items: center;
  padding: 0 5px 0 4px;
  font-size: 14px;
}
.tool { width: 55px; display: flex; justify-content: center; flex: none; }
.tool svg { width: 27px; height: 27px; display: block; }
.nav-first { margin-left: 138px; width: 55px; }
.pager { width: 113px; flex: none; display: flex; align-items: center; padding-left: 14px; }
.page-num { width: 35px; text-align: center; border-bottom: 1px solid #bbb; padding-bottom: 7px; margin-top: 7px; }
.page-total { margin-left: 8px; margin-bottom: 0; }
.tool-sep { width: 1px; height: 34px; background: #ccc; flex: none; margin-right: 13px; }
.zoom-box {
  width: 86px;
  margin-left: 11px;
  margin-top: 7px;
  padding: 0 8px 7px 9px;
  border-bottom: 1px solid #bbb;
  display: flex;
  align-items: center;
  justify-content: space-between;
  flex: none;
}
.zoom-caret { width: 0; height: 0; border: 4px solid transparent; border-top: 6px solid #666; border-bottom: 0; }
.fit { width: 40px; margin-left: 18px; }
.tool-caret { flex: none; margin-left: 1px; margin-right: 19px; }
.kb { width: 55px; }
.sep-b { margin-left: 13px; margin-right: 12px; }
.tools-end { margin-left: auto; display: flex; }

.doc-area { flex: 1; min-height: 0; display: flex; }
.nav-pane {
  width: 22px;
  flex: none;
  background: #efefef;
  display: flex;
  align-items: center;
  justify-content: center;
}
.pane-arrow { width: 0; height: 0; border: 7px solid transparent; border-left: 8px solid #666; border-right: 0; }
.viewer {
  flex: none;
  width: 1480px;
  background: #999;
  overflow: hidden;
  display: flex;
  flex-direction: column;
  align-items: center;
  padding-right: 3px;
}
.pdf-page {
  width: 1005px;
  height: 687px;
  flex: none;
  background: #fff;
  padding: 21px 0 0 73px;
}
.steps {
  width: 860px;
  border-collapse: collapse;
  table-layout: fixed;
  color: #666;
  font-size: 13.900px;
  line-height: 20px;
}
.steps td {
  border: 2px solid var(--table-blue);
  padding: 0 6px;
  vertical-align: top;
}
.steps td:first-child { width: 92px; font-weight: 700; border-right-width: 1px; }
.steps td:last-child { border-left-width: 1px; }
.r34 { height: 34px; }
.r33 { height: 33px; }
.r42 { height: 42px; }
.r45 { height: 45px; }
.pdf-footer {
  width: 630px;
  margin-top: 270px;
  display: flex;
  justify-content: space-between;
  color: #2e74b5;
  font-size: 13.900px;
  line-height: 20px;
}
.pdf-page-2 {
  width: 777px;
  height: 168px;
  flex: none;
  margin-top: 8px;
  background: #fff;
  overflow: hidden;
  text-align: center;
}
.pdf-banner {
  height: 87px;
  background: #4484bc;
  color: #fff;
  display: flex;
  align-items: center;
  padding-left: 28px;
  font-family: Inter, sans-serif;
  font-size: 36px;
  line-height: 40px;
}
.logo-ui { width: 44px; height: 45px; border: 1.500px solid #fff; text-align: center; line-height: 42px; font-weight: 400; }
.logo-path { margin-left: 3px; font-weight: 500; }
.pdf-h2 {
  margin: 26px 0 0;
  font-family: Inter, sans-serif;
  font-size: 25.500px;
  font-weight: 600;
  line-height: 36px;
  color: #4484bc;
  padding-right: 210px;
}
.pdf-p { margin: -1px 0 0; font-size: 14.300px; line-height: 20px; color: #777; white-space: nowrap; }
.splitter {
  width: 44px;
  flex: none;
  background: linear-gradient(90deg, #f4f4f4 20px, #cfcfcf 20px, #cfcfcf 21px, #e9e9e9 21px, #e9e9e9 43px, #cfcfcf 43px);
  display: flex;
  align-items: center;
}
.split-handle { width: 6px; height: 44px; background: #888; margin-left: 7px; margin-top: -50px; }
.splitter .pane-arrow { margin-left: 14px; }

.panel {
  flex: 1;
  display: flex;
  flex-direction: column;
  background: #fafafa;
  min-width: 0;
}
.panel-search {
  margin: 18px 18px 19px 17px;
  height: 44px;
  flex: none;
  background: #fff;
  border: 1px solid #ccc;
  color: #999;
  font-size: 16.500px;
  line-height: 42px;
  padding-left: 16px;
}
.panel-main { height: 559px; flex: none; display: flex; border-bottom: 1px solid #ddd; }
.panel-body { flex: 1; min-width: 0; }
.panel-scroll { width: 20px; background: #f0f0f0; padding: 21px 6px 0 7px; flex: none; }
.panel-thumb { display: block; height: 236px; background: #888; }
.export-head {
  height: 51px;
  border-bottom: 1px solid #ddd;
  display: flex;
  align-items: center;
  padding-left: 31px;
  font-size: 18.500px;
  color: #111;
}
.export-ico { width: 28px; height: 24px; flex: none; }
.export-title { margin-left: 14px; white-space: nowrap; }
.badge { width: 14px; height: 14px; margin-left: 9px; margin-bottom: 3px; flex: none; }
.collapse { width: 16px; height: 10px; margin-left: 16px; margin-bottom: 3px; flex: none; }
.export-form { padding: 0 19px 0 18px; font-size: 15.400px; color: #555; }
.export-h {
  display: flex;
  justify-content: space-between;
  align-items: center;
  margin-top: 30px;
  height: 22px;
  font-size: 17px;
  font-weight: 700;
  color: #444;
}
.globe { width: 20px; height: 18px; margin-top: -6px; }
.export-desc { margin: 13px 0 0; line-height: 21px; }
.link-line { margin-top: 21px; line-height: 21px; color: #0d66d0; }
.field {
  display: flex;
  align-items: center;
  justify-content: space-between;
  border: 1px solid #ddd;
  border-radius: 5px;
  background: #fcfcfc;
  padding: 0 8px 0 12px;
  color: #555;
}
.file-field { height: 38px; margin-top: 9px; }
.select-field { height: 35px; margin-top: 9px; margin-right: -3px; padding-right: 15px; }
.field-x { width: 14px; height: 14px; }
.field-chev { width: 14px; height: 8px; }
.plain-line { line-height: 21px; }
.file-field + .plain-line { margin-top: 25px; }
.lang { margin-top: 22px; }
.lang-val { margin-top: 6px; }
.change { color: #0d66d0; margin-left: 6px; }
.convert-btn {
  margin-top: 62px;
  width: 317px;
  height: 39px;
  border-radius: 20px;
  background: var(--blue);
  color: #fff;
  text-align: center;
  font-size: 17.500px;
  line-height: 38px;
}
.panel-promo {
  flex: 1;
  margin-top: 7px;
  border-top: 1px solid #ccc;
  background: #fdfdfd;
  text-align: center;
  padding-top: 43px;
}
.panel-promo p {
  margin: 0;
  font-size: 15.800px;
  font-weight: 600;
  line-height: 20px;
  color: #444;
}
.trial-btn {
  width: 250px;
  height: 50px;
  margin: 24px auto 0;
  border-radius: 25px;
  background: var(--blue);
  color: #fff;
  font-size: 14.100px;
  line-height: 50px;
}
```
